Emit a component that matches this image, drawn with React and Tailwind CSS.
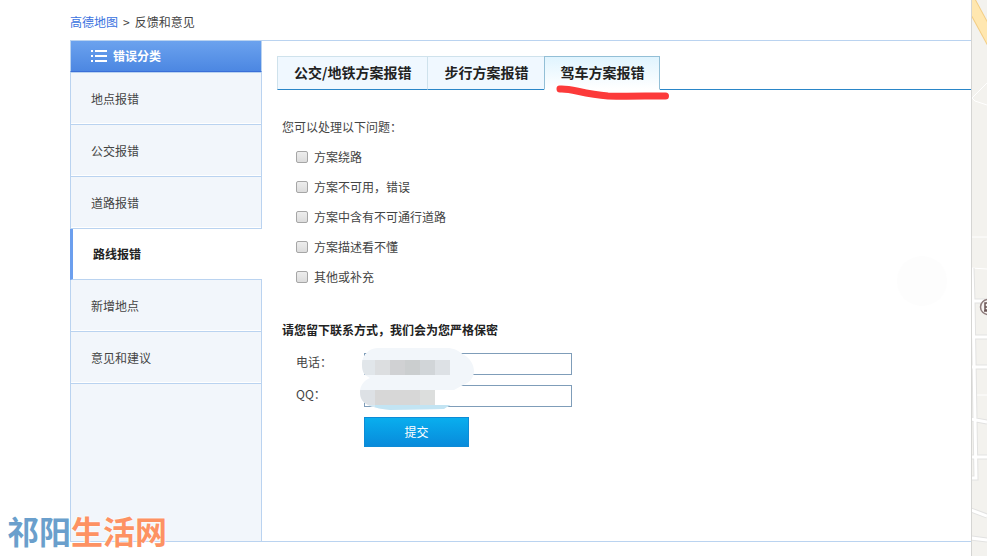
import React, { useState } from 'react'

const categories = ['地点报错', '公交报错', '道路报错', '路线报错', '新增地点', '意见和建议']
const tabs = ['公交/地铁方案报错', '步行方案报错', '驾车方案报错']
const problems = ['方案绕路', '方案不可用，错误', '方案中含有不可通行道路', '方案描述看不懂', '其他或补充']

function Sidebar({ active, onSelect }) {
  return (
    <aside className="w-48 shrink-0 flex flex-col">
      <h2 className="h-[31px] pl-5 flex items-center gap-1.5 text-white font-bold border-x border-x-[#bad3f0] border-b border-b-[#3b6fd8] bg-gradient-to-b from-[#6ba2ee] to-[#4c87e2]">
        <svg width="16" height="12" viewBox="0 0 16 12" fill="currentColor" shapeRendering="crispEdges" aria-hidden="true">
          <path d="M0 0h2v2H0zM4 0h12v2H4zM0 5h2v2H0zM4 5h12v2H4zM0 10h2v2H0zM4 10h12v2H4z" />
        </svg>
        错误分类
      </h2>
      <ul className="border-t border-[#bad3f0]">
        {categories.map((name) => (
          <li key={name}>
            <button
              type="button"
              onClick={() => onSelect(name)}
              className={`block w-full text-left pl-5 border-b border-[#bad3f0] cursor-pointer ${
                name === active
                  ? 'h-[51px] border-l-3 border-l-[#6c9fee] bg-white font-bold text-[#222]'
                  : 'h-[52px] border-x bg-[#f2f6fb] shadow-[inset_0_-1px_0_#fff]'
              }`}
            >
              {name}
            </button>
          </li>
        ))}
      </ul>
      <div className="flex-1 border-x border-[#bad3f0] bg-[#f2f6fb]"></div>
    </aside>
  )
}

function Tabs({ active, onSelect }) {
  return (
    <div className="flex" role="tablist">
      {tabs.map((name) => (
        <div key={name} className="relative">
          <button
            type="button"
            role="tab"
            aria-selected={name === active}
            onClick={() => onSelect(name)}
            className={`block h-[34px] pb-0.5 border-t border-b text-sm font-bold text-[#222] cursor-pointer ${
              name === active
                ? 'px-[15px] border-x border-[#93bfd6] border-b-white bg-gradient-to-b from-[#e0f4fe] to-white'
                : 'px-4 border-l border-l-[#cfe2ec] border-t-[#cfe2ec] border-b-[#2a86c8] bg-[#f0f8ff]'
            }`}
          >
            {name}
          </button>
          {name === tabs[2] && (
            <svg className="absolute left-2 top-6 pointer-events-none" width="120" height="22" viewBox="552 80 120 22" fill="none" aria-hidden="true">
              <path d="M560 89C571 88 582 94 608 96C625 96.500 645 96 665.500 96" stroke="#fc3a3a" strokeWidth="7" strokeLinecap="round" />
            </svg>
          )}
        </div>
      ))}
      <div className="flex-1 border-b border-[#2a86c8]"></div>
    </div>
  )
}

// mosaic laid over the contact details
const cells = [
  [360, 360, 15, 15, '#e1e6ea'],
  [375, 360, 15, 15, '#dcdee0'],
  [390, 360, 15, 15, '#d0d1d3'],
  [405, 360, 15, 15, '#cbcecf'],
  [420, 360, 15, 15, '#d1d5d8'],
  [435, 360, 15, 15, '#dde1e5'],
  [360, 390, 15, 15, '#dde1e5'],
  [375, 390, 45, 15, '#d7d7d7'],
  [420, 390, 15, 15, '#dcdedd'],
  [435, 390, 40, 15, '#ffffff'],
  [360, 405, 15, 5, '#d5e9f3'],
  [375, 405, 80, 5, '#c2e4f3'],
]

function Mosaic() {
  return (
    <svg className="absolute left-[76px] top-0 pointer-events-none" width="118" height="66" viewBox="358 345 118 66" aria-hidden="true">
      <defs>
        <clipPath id="smudge">
          <path d="M378 348H449C456 349 460 352 464 355C470 358 474 365 474 371C474 378 469 383 463 385L454 390V401C452 405 448 406 444 409L390 410C382 409 376 408 370 406C363 403 360 399 360 392C360 386 364 380 370 378L365 375C362 371 361 364 363 358C366 352 371 348 378 348Z" />
        </clipPath>
      </defs>
      <g clipPath="url(#smudge)" shapeRendering="crispEdges">
        <rect x="358" y="345" width="118" height="66" fill="#f2f6fa" />
        {cells.map(([x, y, w, h, fill]) => (
          <rect key={`${x}-${y}`} x={x} y={y} width={w} height={h} fill={fill} />
        ))}
      </g>
    </svg>
  )
}

function ContactRow({ id, label }) {
  return (
    <div className="flex pl-3.5">
      <label htmlFor={id} className="w-[68px] leading-[18px]">{label}</label>
      <input id={id} type="text" className="w-52 h-[22px] px-1 border border-[#7f9db9] bg-white outline-none" />
    </div>
  )
}

function MapStrip() {
  return (
    <div className="w-4 shrink-0 overflow-hidden bg-[#f3f2ee] border-l border-[#d5d5d3]">
      <svg width="16" height="556" viewBox="972 0 16 556" fill="none" aria-hidden="true">
        <path d="M966 -6L992 42" stroke="#f3cd83" strokeWidth="12" />
        <path d="M966 -6L992 42" stroke="#ffe7b0" strokeWidth="10" />
        <path d="M990 80L972 98L975 101L990 106M971 237H987M971 268L987 269M971 395H987" stroke="#fff" />
        <g stroke="#e2e2e1" strokeWidth="5">
          <path d="M972 268L973 301L975 420L976 478H971M971 301H987M971 337H987M971 367H987M971 419L987 422M971 457H987M971 510L987 516M971 538L987 540" />
        </g>
        <g stroke="#fff" strokeWidth="3">
          <path d="M972 268L973 301L975 420L976 478H971M971 301H987M971 337H987M971 367H987M971 419L987 422M971 457H987M971 510L987 516M971 538L987 540" />
        </g>
        <circle cx="988" cy="307" r="7.500" fill="#f7f4f2" stroke="#8d7b7b" strokeWidth="1.500" />
        <path d="M990 303H985V310H990M985 307H990M984 311H990" stroke="#6b5555" strokeWidth="1.500" />
      </svg>
    </div>
  )
}

export default function App() {
  const [category, setCategory] = useState('路线报错')
  const [tab, setTab] = useState('驾车方案报错')

  return (
    <div className="relative flex min-h-screen overflow-hidden bg-white text-xs text-[#444] font-['Noto_Sans_CJK_SC',sans-serif]">
      <main className="flex-1 min-w-0 flex flex-col pl-[70px] pb-3.5">
        <nav className="h-10 pt-1 flex items-center gap-[5px]">
          <a href="#" className="text-[#3a72e0]">高德地图</a>
          <span>&gt;</span>
          <span>反馈和意见</span>
        </nav>

        <div className="flex-1 flex border-y border-[#bad3f0]">
          <Sidebar active={category} onSelect={setCategory} />

          <section className="flex-1 min-w-0 pl-[15px] pt-[15px]">
            <Tabs active={tab} onSelect={setTab} />

            <form className="pl-[5px] pt-[22px]" onSubmit={(e) => e.preventDefault()}>
              <p className="leading-[30px]">您可以处理以下问题：</p>
              <ul className="pl-3.5">
                {problems.map((text) => (
                  <li key={text}>
                    <label className="flex h-[30px] items-center gap-1.5">
                      <input type="checkbox" className="appearance-none w-3 h-3 rounded-xs border border-[#a6a6a6] bg-gradient-to-b from-[#ededed] to-[#dcdcdc] checked:bg-[#5b8fe0]" />
                      {text}
                    </label>
                  </li>
                ))}
              </ul>

              <h3 className="mt-[23px] leading-[30px] font-bold text-[#222]">请您留下联系方式，我们会为您严格保密</h3>
              <div className="relative pt-2 flex flex-col gap-2.5">
                <ContactRow id="phone" label="电话：" />
                <ContactRow id="qq" label="QQ：" />
                <Mosaic />
                <button type="submit" className="ml-[82px] w-[105px] h-[30px] border border-[#0d8bd6] bg-gradient-to-b from-[#0aaeee] to-[#098bdb] text-white cursor-pointer">
                  提交
                </button>
              </div>
            </form>
          </section>
        </div>
      </main>

      <MapStrip />

      <div className="absolute right-10 top-64 w-[50px] h-[50px] rounded-full bg-[#fdfdfd]"></div>

      <div className="absolute left-[7px] bottom-1.5 text-[32px] leading-10 font-bold [text-shadow:0_0_2px_#fff,0_0_2px_#fff]">
        <span className="text-[#6a9fcc]">祁阳</span>
        <span className="text-[#fd9263]">生活网</span>
      </div>
    </div>
  )
}
